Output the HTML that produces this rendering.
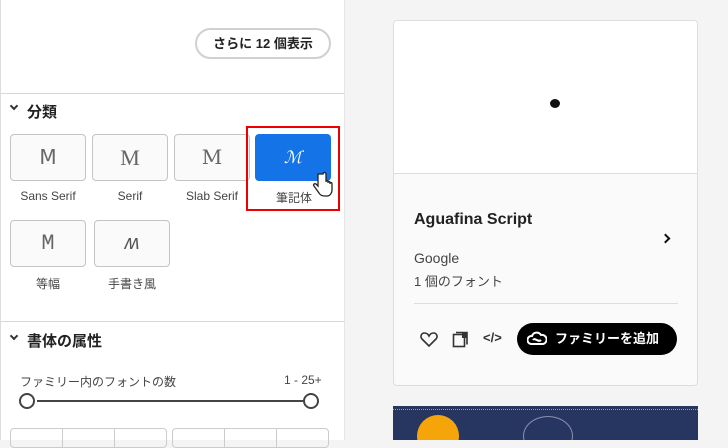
<!DOCTYPE html>
<html><head><meta charset="utf-8"><style>
*{box-sizing:border-box;margin:0;padding:0}
body{width:728px;height:440px;overflow:hidden;background:#f4f4f4;font-family:"Liberation Sans","Noto Sans CJK JP",sans-serif;color:#2c2c2c;position:relative}
.left{position:absolute;left:0;top:0;width:345px;height:440px;background:#fff;border-left:1px solid #ddd;border-right:1px solid #e6e6e6}
.abs{position:absolute}
.more{left:194px;top:28px;width:136px;height:31px;border:2px solid #d0d0d0;border-radius:16px;font-size:13px;font-weight:bold;text-align:center;line-height:27px;color:#222}
.hr{height:1px;background:#d8d8d8;left:0;width:344px}
.h{font-size:15px;font-weight:bold;color:#222}
.chev{width:6px;height:6px;border-right:2px solid #333;border-bottom:2px solid #333;transform:rotate(45deg)}
.tile{width:76px;height:47px;border:1px solid #c4c4c4;border-radius:4px;background:#fafafa;text-align:center;line-height:45px;font-size:22px;color:#666}
.lab{font-size:12px;color:#444;text-align:center;width:90px}
.card{left:393px;top:20px;width:305px;height:366px;background:#fafafa;border:1px solid #ddd;border-radius:4px;overflow:hidden}
.btn{left:517px;top:323px;width:160px;height:32px;background:#000;border-radius:16px;color:#fff;font-size:13px;font-weight:bold;line-height:32px;padding-left:38px}
</style></head><body>
<div class="left">
<div class="abs more">さらに 12 個表示</div>
<div class="abs hr" style="top:93px"></div>
<div class="abs chev" style="left:10px;top:103px"></div>
<div class="abs h" style="left:26px;top:101px">分類</div>
<div class="abs tile" style="left:9px;top:134px;font-family:'DejaVu Sans';font-size:20px">M</div>
<div class="abs tile" style="left:91px;top:134px;font-family:'Liberation Serif'">M</div>
<div class="abs tile" style="left:173px;top:134px;font-family:'DejaVu Serif';font-size:20px">M</div>
<div class="abs tile" style="left:254px;top:134px;background:#1473e6;border-color:#1473e6;color:#fff;font-family:'Liberation Serif';font-style:italic;font-size:17px">ℳ</div>
<div class="abs" style="left:245px;top:126px;width:94px;height:85px;border:2px solid #e00"></div>
<div class="abs lab" style="left:2px;top:189px">Sans Serif</div>
<div class="abs lab" style="left:84px;top:189px">Serif</div>
<div class="abs lab" style="left:166px;top:189px">Slab Serif</div>
<div class="abs lab" style="left:248px;top:189px">筆記体</div>
<svg class="abs" style="left:311px;top:171px" width="22" height="28" viewBox="0 0 22 28"><path d="M6 3v12l-2-2c-2-1-3 1-2 2l5 7c1 2 3 3 6 3h2c3 0 5-3 5-6v-6c0-2-2-2-2 0v-1c0-2-2-2-2 0v-1c0-2-2-2-2 0V3c0-2-3-2-3 0z" fill="#fff" stroke="#222" stroke-width="1.3"/></svg>
<div class="abs tile" style="left:9px;top:220px;font-family:'Liberation Mono'">M</div>
<div class="abs tile" style="left:93px;top:220px;font-style:italic;font-size:20px;color:#555">ʍ</div>
<div class="abs lab" style="left:2px;top:275px">等幅</div>
<div class="abs lab" style="left:86px;top:275px">手書き風</div>
<div class="abs hr" style="top:321px"></div>
<div class="abs chev" style="left:10px;top:333px"></div>
<div class="abs h" style="left:26px;top:330px">書体の属性</div>
<div class="abs" style="left:19px;top:373px;font-size:12px;color:#444">ファミリー内のフォントの数</div>
<div class="abs" style="left:283px;top:373px;font-size:12px;color:#444">1 - 25+</div>
<div class="abs" style="left:36px;top:400px;width:268px;height:2px;background:#444"></div>
<div class="abs" style="left:18px;top:393px;width:16px;height:16px;border:2px solid #444;border-radius:50%;background:#fff"></div>
<div class="abs" style="left:302px;top:393px;width:16px;height:16px;border:2px solid #444;border-radius:50%;background:#fff"></div>
<div class="abs" style="left:9px;top:428px;width:157px;height:20px;border:1px solid #ccc;border-radius:4px"></div>
<div class="abs" style="left:61px;top:428px;width:53px;height:20px;border-left:1px solid #ccc;border-right:1px solid #ccc"></div>
<div class="abs" style="left:171px;top:428px;width:157px;height:20px;border:1px solid #ccc;border-radius:4px"></div>
<div class="abs" style="left:223px;top:428px;width:53px;height:20px;border-left:1px solid #ccc;border-right:1px solid #ccc"></div>
</div>
<div class="abs card">
<div class="abs" style="left:0;top:0;width:305px;height:153px;background:#fff;border-bottom:1px solid #ddd"></div>
<div class="abs" style="left:156px;top:78px;width:10px;height:9px;border-radius:50%;background:#111"></div>
<div class="abs" style="left:20px;top:190px;font-size:16px;font-weight:bold;color:#222">Aguafina Script</div>
<div class="abs" style="left:20px;top:229px;font-size:14px;color:#444">Google</div>
<div class="abs" style="left:20px;top:250px;font-size:13px;color:#444">1 個のフォント</div>
<div class="abs" style="left:268px;top:214px;width:7px;height:7px;border-right:2px solid #111;border-top:2px solid #111;transform:rotate(45deg)"></div>
<div class="abs" style="left:20px;top:282px;width:264px;height:1px;background:#ddd"></div>
</div>
<svg class="abs" style="left:420px;top:331px" width="18" height="16" viewBox="0 0 18 16"><path d="M9 15L2 8C0 6 1 2 4.5 2 7 2 8.5 4 9 5c.5-1 2-3 4.5-3C17 2 18 6 16 8z" fill="none" stroke="#333" stroke-width="1.6"/></svg>
<svg class="abs" style="left:452px;top:331px" width="17" height="17" viewBox="0 0 17 17"><rect x="1.5" y="3.5" width="11" height="12" fill="none" stroke="#333" stroke-width="1.6"/><path d="M4 1.5h11v12" fill="none" stroke="#333" stroke-width="1.6"/><rect x="10" y="2" width="5" height="5" fill="#333"/></svg>
<div class="abs" style="left:483px;top:330px;font-size:13px;color:#333;font-weight:bold">&lt;/&gt;</div>
<div class="abs btn">ファミリーを追加</div>
<svg class="abs" style="left:527px;top:330px" width="20" height="18" viewBox="0 0 20 18"><path d="M4 14a4 4 0 0 1 1-8 5 5 0 0 1 9-1 4.5 4.5 0 0 1 2 9zM6 10c2-3 5 3 8 0" fill="none" stroke="#fff" stroke-width="2"/></svg>
<div class="abs" style="left:393px;top:406px;width:305px;height:34px;background:#263660;overflow:hidden">
<div class="abs" style="left:0;top:3px;width:305px;height:1px;border-top:1px dotted #c89c3a"></div>
<div class="abs" style="left:24px;top:9px;width:42px;height:42px;border-radius:50%;background:#f5a50a"></div>
<div class="abs" style="left:130px;top:10px;width:50px;height:40px;border:1px solid #8b8faf;border-radius:50%"></div>
</div>
</body></html>
